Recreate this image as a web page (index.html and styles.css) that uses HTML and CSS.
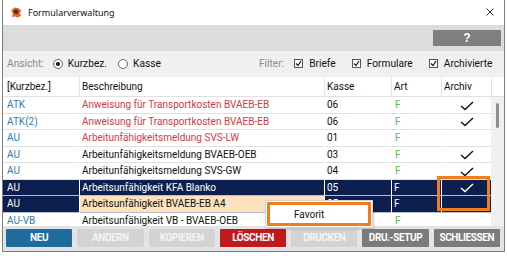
FILE: index.html
```html
<!DOCTYPE html>
<html lang="de">
<head>
<meta charset="utf-8">
<title>Formularverwaltung</title>
<link rel="stylesheet" href="styles.css">
</head>
<body>
<div class="window">
  <div class="titlebar">
    <svg class="app-icon" width="12" height="11" viewBox="0 0 11 10">
      <path d="M1 3 L4 0.5 L8 1 L10.5 3.5 L9 5 L10 8 L7 9.5 L4 8.5 L2 9.5 L2.5 6 Z" fill="#e8672c"/>
      <path d="M3 3 L6 2 L8 4 L6.5 6.5 L4 6 Z" fill="#5b2617"/>
      <path d="M1 3 L3 1.5 L3.5 3.5 Z" fill="#f4a15a"/>
    </svg>
    <span class="title">Formularverwaltung</span>
    <svg class="close" width="8" height="8" viewBox="0 0 8 8">
      <path d="M0.5 0.5 L7.5 7.5 M7.5 0.5 L0.5 7.5" stroke="#333" stroke-width="1"/>
    </svg>
  </div>
  <div class="toolbar">
    <div class="help">?</div>
  </div>
  <div class="filterbar">
    <span class="lbl">Ansicht:</span>
    <span class="radio on"></span><span class="opt">Kurzbez.</span>
    <span class="radio"></span><span class="opt">Kasse</span>
    <span class="lbl filter-lbl">Filter:</span>
    <span class="cb"><svg width="7" height="7" viewBox="0 0 7 7"><path d="M1 3.5 L3 5.5 L6 1" fill="none" stroke="#222" stroke-width="1.3"/></svg></span><span class="opt">Briefe</span>
    <span class="cb"><svg width="7" height="7" viewBox="0 0 7 7"><path d="M1 3.5 L3 5.5 L6 1" fill="none" stroke="#222" stroke-width="1.3"/></svg></span><span class="opt">Formulare</span>
    <span class="cb"><svg width="7" height="7" viewBox="0 0 7 7"><path d="M1 3.5 L3 5.5 L6 1" fill="none" stroke="#222" stroke-width="1.3"/></svg></span><span class="opt">Archivierte</span>
  </div>
  <div class="headrow">
    <div class="hc kz">[Kurzbez.]</div>
    <div class="hc">Beschreibung</div>
    <div class="hc">Kasse</div>
    <div class="hc">Art</div>
    <div class="hc">Archiv</div>
    <div class="hc"></div>
  </div>
  <div class="body">
    <div class="rows">
      <div class="c kz">ATK</div><div class="c red">Anweisung für Transportkosten BVAEB-EB</div><div class="c">06</div><div class="c art">F</div><div class="c chk"><svg width="14" height="10" viewBox="0 0 14 10"><path d="M1 5 L5 8.5 L13 1" fill="none" stroke="#111" stroke-width="1.4"/></svg></div>
      <div class="c kz">ATK(2)</div><div class="c red">Anweisung für Transportkosten BVAEB-EB</div><div class="c">06</div><div class="c art">F</div><div class="c chk"><svg width="14" height="10" viewBox="0 0 14 10"><path d="M1 5 L5 8.5 L13 1" fill="none" stroke="#111" stroke-width="1.4"/></svg></div>
      <div class="c kz">AU</div><div class="c red">Arbeitunfähigkeitsmeldung SVS-LW</div><div class="c">01</div><div class="c art">F</div><div class="c chk"></div>
      <div class="c kz">AU</div><div class="c">Arbeitunfähigkeitsmeldung BVAEB-OEB</div><div class="c">03</div><div class="c art">F</div><div class="c chk"><svg width="14" height="10" viewBox="0 0 14 10"><path d="M1 5 L5 8.5 L13 1" fill="none" stroke="#111" stroke-width="1.4"/></svg></div>
      <div class="c kz">AU</div><div class="c">Arbeitunfähigkeitsmeldung SVS-GW</div><div class="c">04</div><div class="c art">F</div><div class="c chk"><svg width="14" height="10" viewBox="0 0 14 10"><path d="M1 5 L5 8.5 L13 1" fill="none" stroke="#111" stroke-width="1.4"/></svg></div>
      <div class="c sel kzsel">AU</div><div class="c sel">Arbeitsunfähigkeit KFA Blanko</div><div class="c sel">05</div><div class="c sel">F</div><div class="c sel chk"><svg width="14" height="10" viewBox="0 0 14 10"><path d="M1 5 L5 8.5 L13 1" fill="none" stroke="#fff" stroke-width="1.4"/></svg></div>
      <div class="c sel kzsel">AU</div><div class="c focus">Arbeitsunfähigkeit BVAEB-EB A4</div><div class="c sel">05</div><div class="c sel">F</div><div class="c sel chk"></div>
      <div class="c kz">AU-VB</div><div class="c">Arbeitsunfähigkeit VB - BVAEB-OEB</div><div class="c">05</div><div class="c art">F</div><div class="c chk"></div>
    </div>
    <div class="scrollbar"><div class="thumb"></div></div>
  </div>
  <div class="buttons">
    <div class="btn blue">NEU</div>
    <div class="btn off">ÄNDERN</div>
    <div class="btn off">KOPIEREN</div>
    <div class="btn red-btn">LÖSCHEN</div>
    <div class="btn off">DRUCKEN</div>
    <div class="btn dark">DRU.-SETUP</div>
    <div class="btn dark">SCHLIESSEN</div>
  </div>
  <div class="archiv-hl"></div>
  <div class="menu">
    <div class="menu-item">Favorit</div>
  </div>
</div>
</body>
</html>
```

FILE: styles.css
```css
* { box-sizing: border-box; margin: 0; padding: 0; }
body {
  margin: 0;
  background: #ffffff;
  width: 507px;
  height: 256px;
  overflow: hidden;
  font-family: Roboto, "Liberation Sans", sans-serif;
  font-size: 10px;
  color: #111;
}
.window {
  position: relative;
  margin-left: 2px;
  width: 503px;
  height: 252px;
  border: 1px solid #7d7d7d;
  border-top: none;
  display: flex;
  flex-direction: column;
  background: #fff;
}
.titlebar {
  height: 25px;
  flex: none;
  display: flex;
  align-items: center;
  padding-left: 7px;
  padding-bottom: 1px;
}
.app-icon { flex: none; }
.title {
  margin-left: 6px;
  font-family: "Noto Sans", "Open Sans", sans-serif;
  font-size: 9px;
  color: #111;
}
.close { margin-left: auto; margin-right: 10px; }
.toolbar {
  height: 26px;
  flex: none;
  background: #dcdcdc;
  display: flex;
  justify-content: flex-end;
  padding: 5px 3px 0 0;
}
.help {
  width: 68px;
  height: 16px;
  background: #7f7f7f;
  color: #fff;
  font-family: "Liberation Sans", sans-serif;
  font-weight: bold;
  font-size: 12px;
  line-height: 16px;
  text-align: center;
}
.filterbar {
  height: 26px;
  flex: none;
  background: #f0f0f0;
  display: flex;
  align-items: center;
  padding-left: 4px;
  padding-bottom: 1px;
  font-size: 10.2px;
}
.lbl { color: #8c8c8c; }
.opt { color: #111; }
.radio {
  width: 10px;
  height: 10px;
  border: 1px solid #666;
  border-radius: 50%;
  background: #fff;
  margin: 0 5px 0 9px;
  display: flex;
  align-items: center;
  justify-content: center;
}
.radio.on::after {
  content: "";
  width: 4px;
  height: 4px;
  border-radius: 50%;
  background: #111;
}
.radio + .opt + .radio { margin-left: 11px; }
.filter-lbl { margin-left: 98px; }
.cb {
  width: 9px;
  height: 9px;
  border: 1px solid #555;
  background: #fff;
  display: flex;
  align-items: center;
  justify-content: center;
  margin: 0 6px 0 10px;
}
.cb + .opt + .cb { margin-left: 16px; }
.headrow {
  height: 20px;
  flex: none;
  display: grid;
  grid-template-columns: 76px 244px 66px 49px 49px 12px;
  column-gap: 1px;
  background: #e4e4e4;
  border-bottom: 1px solid #e0e0e0;
}
.hc {
  background: #fff;
  display: flex;
  align-items: center;
  padding-left: 2px;
  color: #111;
}
.hc.kz { padding-left: 4px; }
.body {
  flex: 1;
  display: flex;
  overflow: hidden;
}
.rows {
  width: 488px;
  flex: none;
  display: grid;
  grid-template-columns: 76px 244px 66px 49px 49px;
  grid-auto-rows: 16.5px;
  column-gap: 1px;
  background: #fff;
  align-content: start;
}
.c {
  border-bottom: 1px solid #e0e0e0;
  padding-left: 2px;
  display: flex;
  align-items: center;
  white-space: nowrap;
  overflow: hidden;
  color: #111;
}
.c.kz { color: #2d7bb6; padding-left: 4px; }
.c.red { color: #d23a3f; }
.c.art { color: #62b842; padding-left: 3px; }
.c.chk { justify-content: center; padding-left: 0; padding-top: 2px; }
.c.sel {
  background: #0c1f4f;
  color: #fff;
  border-bottom-color: #b8bfcc;
}
.c.kzsel { padding-left: 4px; }
.c.focus {
  background: #fde2bd;
  color: #111;
  border-bottom-color: #b8bfcc;
}
.scrollbar {
  flex: 1;
  background: #f0f0f0;
  padding: 6px 0 0 5px;
}
.thumb {
  width: 3px;
  height: 25px;
  background: #8e8e8e;
  border-radius: 2px;
}
.buttons {
  height: 25px;
  flex: none;
  background: #e3e3e3;
  display: flex;
  gap: 5px;
  padding: 3px 4px 4px 3px;
}
.btn {
  flex: 1;
  height: 18px;
  line-height: 18px;
  text-align: center;
  font-family: Roboto, "Liberation Sans", sans-serif;
  font-weight: bold;
  font-size: 10px;
  letter-spacing: -0.4px;
  color: #fff;
  border-radius: 1px;
}
.btn.blue { background: #1f6b9d; }
.btn.off { background: #d3d3d3; color: #f4f4f4; }
.btn.red-btn { background: #c0181c; }
.btn.dark { background: #7b7b7b; }
.archiv-hl {
  position: absolute;
  left: 434px;
  top: 176px;
  width: 53px;
  height: 35px;
  border: 3px solid #f07d1e;
}
.menu {
  position: absolute;
  left: 262px;
  top: 200px;
  width: 108px;
  height: 28px;
  background: #fff;
  border: 1px solid #d4d4d4;
  box-shadow: 1px 1px 2px rgba(0,0,0,0.2);
  padding: 1px;
}
.menu-item {
  height: 24px;
  border: 3px solid #f07d1e;
  display: flex;
  align-items: center;
  padding-left: 24px;
  font-size: 10px;
  color: #111;
}
```
